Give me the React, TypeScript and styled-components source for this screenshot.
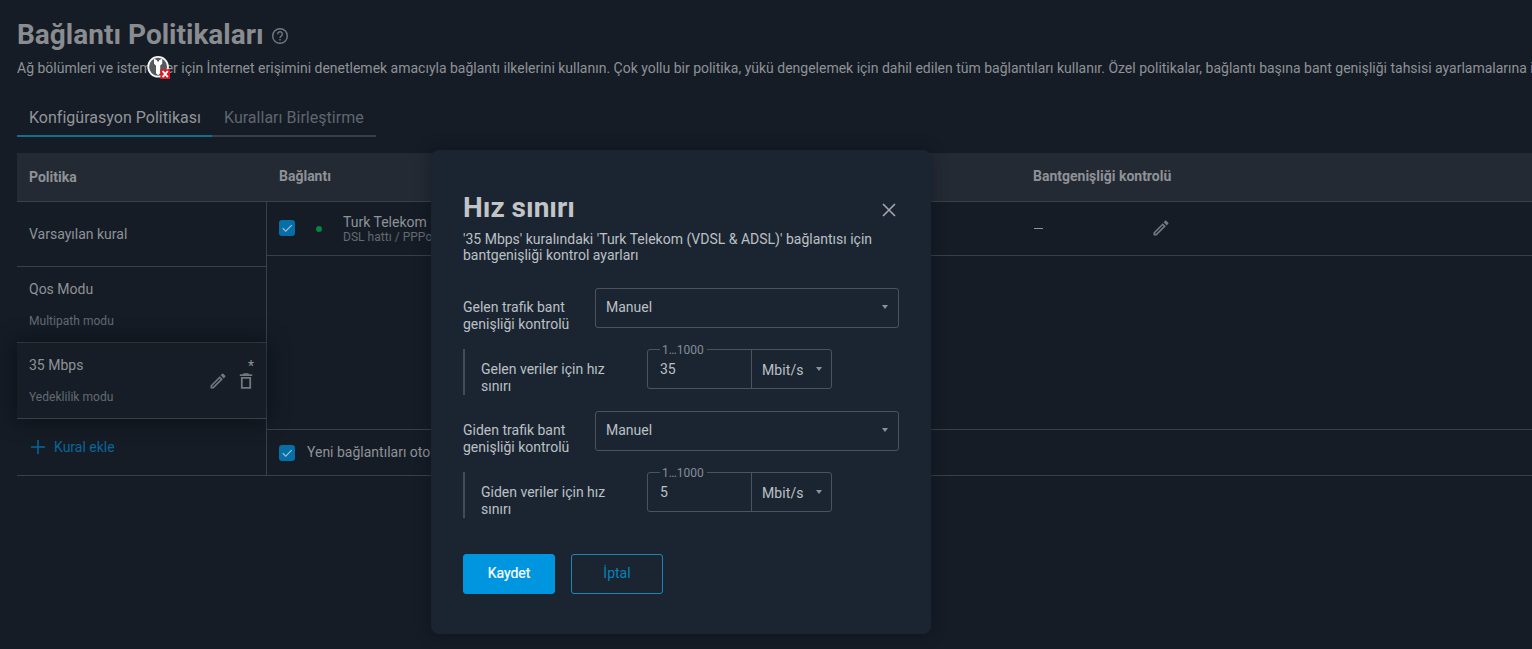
import React from "react";
import styled, { createGlobalStyle } from "styled-components";

const GlobalStyle = createGlobalStyle`
  * { box-sizing: border-box; }
  html, body { margin: 0; padding: 0; background: #151c26; }
  body { font-family: Roboto, "Open Sans", sans-serif; font-size: 14px; line-height: 16px; color: #8f9296; overflow: hidden; }
  h1, h2, p { margin: 0; }
  button { font: inherit; cursor: pointer; }
`;

const LINE = "#3a4048";

const Page = styled.main`
  height: 649px;
  padding-left: 17px;
  overflow: hidden;
  background: #151c26;
`;

const PageHeader = styled.header`
  display: flex;
  align-items: center;
  gap: 7px;
  padding-top: 19px;
`;

const PageTitle = styled.h1`
  font-size: 28px;
  line-height: 32px;
  font-weight: 700;
  color: #8a8c90;
`;

const HelpSlot = styled.span`
  display: flex;
  padding-top: 2px;
  color: #73787f;
`;

const Description = styled.p`
  position: relative;
  width: 1900px;
  margin-top: 9px;
  white-space: nowrap;
  letter-spacing: -0.005px;
`;

const KeyBadge = styled.svg`
  position: absolute;
  left: 129px;
  top: -5px;
`;

const Tabs = styled.nav`
  display: flex;
  margin-top: 23px;
  font-size: 16px;
  line-height: 20px;
`;

const Tab = styled.a<{ $active?: boolean }>`
  width: ${(p) => (p.$active ? 195 : 164)}px;
  height: 38px;
  padding: 9px 12px 0;
  white-space: nowrap;
  letter-spacing: 0.02px;
  color: ${(p) => (p.$active ? "#92959a" : "#5f666f")};
  border-bottom: 2px solid ${(p) => (p.$active ? "#136f8c" : "#3a4048")};
`;

const Table = styled.section`
  width: 1600px;
  margin-top: 16px;
  border-bottom: 1px solid ${LINE};
`;

const TableHead = styled.div`
  display: flex;
  height: 49px;
  background: #242a34;
  border-bottom: 1px solid ${LINE};
  font-weight: 700;
`;

const HeadCell = styled.div<{ $width: number; $top?: number }>`
  width: ${(p) => p.$width}px;
  flex: none;
  padding: ${(p) => p.$top ?? 15}px 12px 0;
`;

const TableBody = styled.div`
  display: flex;
  height: 273px;
`;

const RuleList = styled.div`
  width: 250px;
  flex: none;
  border-right: 1px solid ${LINE};
`;

const Rule = styled.div<{ $height: number; $selected?: boolean }>`
  position: relative;
  display: flex;
  flex-direction: column;
  justify-content: center;
  gap: 17px;
  height: ${(p) => p.$height}px;
  padding: 0 12px;
  border-bottom: 1px solid ${LINE};
  ${(p) => p.$selected && "background: #161d27; box-shadow: 0 0 20px 3px rgba(0, 0, 0, 0.38);"}
`;

const Muted = styled.span`
  font-size: 12px;
  line-height: 14px;
  letter-spacing: 0.03px;
  color: #646a72;
`;

const RuleActions = styled.div`
  position: absolute;
  right: 10px;
  top: 28px;
  display: flex;
  gap: 8px;
  color: #73777e;
`;

const Unsaved = styled.span`
  position: absolute;
  right: 12px;
  top: 15px;
`;

const AddRule = styled.div`
  display: flex;
  align-items: center;
  gap: 8px;
  height: 56px;
  padding: 0 13px;
  color: #08679a;
`;

const Connections = styled.div`
  display: flex;
  flex-direction: column;
  flex: 1;
`;

const ConnectionRow = styled.div`
  display: flex;
  align-items: center;
  height: 54px;
  padding: 0 0 2px 12px;
  border-bottom: 1px solid ${LINE};
`;

const AutoRow = styled.label`
  display: flex;
  align-items: center;
  gap: 12px;
  height: 46px;
  margin-top: auto;
  padding: 0 0 1px 12px;
  border-top: 1px solid ${LINE};

  > span { margin-top: 1px; }
`;

const Check = styled.span`
  display: flex;
  width: 16px;
  height: 16px;
  border-radius: 3px;
  background: #056fa8;
`;

const Dot = styled.span`
  width: 6px;
  height: 6px;
  margin: 2px 21px 0;
  border-radius: 50%;
  background: #078342;
`;

const ConnectionName = styled.div`
  display: flex;
  flex-direction: column;
  width: 690px;
  padding-top: 2px;
`;

const Bandwidth = styled.div`
  display: flex;
  align-items: center;
  gap: 108px;
  color: #73777e;
`;

const EmptyValue = styled.span`
  width: 9px;
  height: 1px;
  margin: 1px 0 0 1px;
  background: #8f9296;
`;

const Dialog = styled.section`
  position: absolute;
  left: 431px;
  top: 150px;
  width: 499.5px;
  height: 484px;
  padding: 42px 31px 0 32px;
  border-radius: 8px;
  background: #1b2531;
  box-shadow: 0 0 14px 2px rgba(8, 14, 22, 0.35);
  color: #bcc0c5;
`;

const DialogHead = styled.div`
  display: flex;
  justify-content: space-between;
  align-items: center;
  height: 32px;
`;

const DialogTitle = styled.h2`
  font-size: 28px;
  line-height: 32px;
  font-weight: 700;
  color: #c2c4c7;
`;

const CloseButton = styled.button`
  display: flex;
  margin: 4px 4px 0 0;
  padding: 0;
  border: 0;
  background: none;
  color: #a3a8b0;
`;

const DialogText = styled.p`
  width: 430px;
  margin-top: 7px;
`;

const Field = styled.div<{ $first?: boolean }>`
  display: flex;
  margin-top: ${(p) => (p.$first ? 25 : 16)}px;
`;

const FieldLabel = styled.div`
  width: 132px;
  padding-top: 11px;
  line-height: 17px;
`;

const Select = styled.div`
  display: flex;
  align-items: center;
  justify-content: space-between;
  width: 304px;
  height: 40px;
  padding: 0 10px 2px;
  border: 1px solid #4b535f;
  border-radius: 3px;
`;

const Caret = styled.span`
  width: 0;
  height: 0;
  border: 3px solid transparent;
  border-top: 4px solid #8a929c;
  border-bottom: 0;
`;

const SubField = styled.div`
  display: flex;
  height: 46px;
  margin-top: 16px;
  border-left: 2px solid #444c58;
  padding-left: 16px;
`;

const SubLabel = styled.div`
  width: 166px;
  padding: 12px 30px 0 0;
  line-height: 17px;
`;

const SpeedGroup = styled.div`
  position: relative;
  display: flex;
  width: 185px;
  height: 40px;
  border: 1px solid #4b535f;
  border-radius: 3px;
`;

const Hint = styled.span`
  position: absolute;
  left: 12px;
  top: -7px;
  padding: 0 3px 0 2px;
  font-size: 12px;
  line-height: 14px;
  letter-spacing: 0.02px;
  background: #1b2531;
  color: #858c96;
`;

const SpeedValue = styled.div`
  width: 104px;
  padding: 11px 12px;
  border-right: 1px solid #4b535f;
`;

const Unit = styled.div`
  display: flex;
  align-items: center;
  justify-content: space-between;
  flex: 1;
  padding: 2px 9.5px 0 10px;
  letter-spacing: 0.1px;

  ${Caret} { margin-bottom: 3px; }
`;

const Buttons = styled.div`
  display: flex;
  gap: 16px;
  margin-top: 36px;
`;

const Button = styled.button<{ $primary?: boolean }>`
  width: 92px;
  height: 40px;
  padding: 0 0 2px;
  border: 1px solid ${(p) => (p.$primary ? "#0096df" : "#1b86b8")};
  border-radius: 3px;
  background: ${(p) => (p.$primary ? "#0096df" : "transparent")};
  color: ${(p) => (p.$primary ? "#fff" : "#0880bd")};
  -webkit-text-stroke: ${(p) => (p.$primary ? "0.2px #fff" : "0")};
`;

const Pencil = () => (
  <svg width="20" height="20" viewBox="0 0 24 24" fill="currentColor">
    <path d="M14.06 9.02l.92.92L5.92 19H5v-.92l9.06-9.06M17.66 3c-.25 0-.51.1-.7.29l-1.83 1.83 3.75 3.75 1.83-1.83a.996.996 0 0 0 0-1.41l-2.34-2.34A.98.98 0 0 0 17.66 3zm-3.6 3.19L3 17.25V21h3.75L17.81 9.94l-3.75-3.75z" />
  </svg>
);

const Trash = () => (
  <svg width="20" height="20" viewBox="0 0 20 20" fill="none" stroke="currentColor" strokeWidth="1.8">
    <path d="M3.8 4.1h12.4M7.3 3.1h5.4M5.8 6.8v10.1h8.4V6.8z" />
  </svg>
);

const CheckBox = () => (
  <Check>
    <svg width="16" height="16" viewBox="0 0 16 16" fill="none" stroke="#a9bfce" strokeWidth="1.2">
      <path d="M3.7 8.2l3 3 6-6" />
    </svg>
  </Check>
);

const KeyIcon = () => (
  <KeyBadge width="26" height="26" viewBox="0 0 26 26">
    <circle cx="12.1" cy="11.8" r="9.9" fill="#555b5d" stroke="#f4f4f4" strokeWidth="1.8" />
    <path d="M8.6 4.6v3.8l2 2v7.7l1.5 1.4 1.5-1.4v-7.7l2-2V4.6l-2 1.2v1.2h-3V5.8z" fill="#fff" stroke="#fff" strokeWidth="1.2" />
    <rect x="14.4" y="14.2" width="9.6" height="9.8" fill="#e01822" />
    <path d="M16.6 16l5.2 6.2M21.8 16l-5.2 6.2" stroke="#fff" strokeWidth="1.9" />
  </KeyBadge>
);

const fields = [
  { label: "Gelen trafik bant genişliği kontrolü", sub: "Gelen veriler için hız sınırı", value: "35" },
  { label: "Giden trafik bant genişliği kontrolü", sub: "Giden veriler için hız sınırı", value: "5" },
];

export default function App() {
  return (
    <Page>
      <GlobalStyle />
      <PageHeader>
        <PageTitle>Bağlantı Politikaları</PageTitle>
        <HelpSlot>
          <svg width="18" height="18" viewBox="0 0 18 18" fill="none" stroke="currentColor" strokeWidth="1.4">
            <circle cx="9" cy="9" r="7.3" />
            <path d="M6.7 7.2a2.3 2.3 0 1 1 3.7 1.7c-.9.7-1.4 1-1.4 2M9 12v1.5" />
          </svg>
        </HelpSlot>
      </PageHeader>
      <Description>
        Ağ bölümleri ve istemciler için İnternet erişimini denetlemek amacıyla bağlantı ilkelerini kullanın. Çok yollu bir politika, yükü dengelemek için dahil edilen tüm bağlantıları kullanır. Özel politikalar, bağlantı başına bant genişliği tahsisi ayarlamalarına izin verir.
        <KeyIcon />
      </Description>
      <Tabs>
        <Tab $active>Konfigürasyon Politikası</Tab>
        <Tab>Kuralları Birleştirme</Tab>
      </Tabs>

      <Table>
        <TableHead>
          <HeadCell $width={250} $top={16}>Politika</HeadCell>
          <HeadCell $width={754}>Bağlantı</HeadCell>
          <HeadCell $width={300}>Bantgenişliği kontrolü</HeadCell>
        </TableHead>
        <TableBody>
          <RuleList>
            <Rule $height={65}>Varsayılan kural</Rule>
            <Rule $height={76}>
              Qos Modu
              <Muted>Multipath modu</Muted>
            </Rule>
            <Rule $height={76} $selected>
              35 Mbps
              <Muted>Yedeklilik modu</Muted>
              <Unsaved>*</Unsaved>
              <RuleActions>
                <Pencil />
                <Trash />
              </RuleActions>
            </Rule>
            <AddRule>
              <svg width="16" height="16" viewBox="0 0 16 16" stroke="currentColor" strokeWidth="1.5">
                <path d="M1 8h14M8 1v14" />
              </svg>
              Kural ekle
            </AddRule>
          </RuleList>
          <Connections>
            <ConnectionRow>
              <CheckBox />
              <Dot />
              <ConnectionName>
                Turk Telekom (VDSL)
                <Muted>DSL hattı / PPPoE</Muted>
              </ConnectionName>
              <Bandwidth>
                <EmptyValue />
                <Pencil />
              </Bandwidth>
            </ConnectionRow>
            <AutoRow>
              <CheckBox />
              Yeni bağlantıları otomatik ekle
            </AutoRow>
          </Connections>
        </TableBody>
      </Table>

      <Dialog role="dialog">
        <DialogHead>
          <DialogTitle>Hız sınırı</DialogTitle>
          <CloseButton aria-label="Kapat">
            <svg width="14" height="14" viewBox="0 0 14 14" stroke="currentColor" strokeWidth="1.6">
              <path d="M1 1l12 12M13 1L1 13" />
            </svg>
          </CloseButton>
        </DialogHead>
        <DialogText>
          '35 Mbps' kuralındaki 'Turk Telekom (VDSL &amp; ADSL)' bağlantısı için bantgenişliği kontrol ayarları
        </DialogText>
        {fields.map((f, i) => (
          <React.Fragment key={f.sub}>
            <Field $first={i === 0}>
              <FieldLabel>{f.label}</FieldLabel>
              <Select>
                Manuel
                <Caret />
              </Select>
            </Field>
            <SubField>
              <SubLabel>{f.sub}</SubLabel>
              <SpeedGroup>
                <Hint>1…1000</Hint>
                <SpeedValue>{f.value}</SpeedValue>
                <Unit>
                  Mbit/s
                  <Caret />
                </Unit>
              </SpeedGroup>
            </SubField>
          </React.Fragment>
        ))}
        <Buttons>
          <Button $primary>Kaydet</Button>
          <Button>İptal</Button>
        </Buttons>
      </Dialog>
    </Page>
  );
}
